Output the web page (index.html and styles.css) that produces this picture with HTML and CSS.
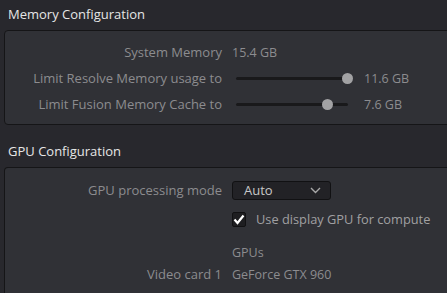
FILE: index.html
```html
<!DOCTYPE html>
<html lang="en">
<head>
    <meta charset="UTF-8">
    <title>Memory and GPU</title>
    <link rel="stylesheet" href="styles.css">
</head>
<body>
    <div class="section">
        <h2 class="title">Memory Configuration</h2>
        <div class="panel mem">
            <div class="row">
                <span class="label">System Memory</span>
                <span class="value">15.4 GB</span>
            </div>
            <div class="row">
                <span class="label">Limit Resolve Memory usage to</span>
                <div class="slider"><div class="thumb" style="left: 100%"></div></div>
                <span class="value">11.6 GB</span>
            </div>
            <div class="row">
                <span class="label">Limit Fusion Memory Cache to</span>
                <div class="slider"><div class="thumb" style="left: 82%"></div></div>
                <span class="value">7.6 GB</span>
            </div>
        </div>
    </div>

    <div class="section">
        <h2 class="title second">GPU Configuration</h2>
        <div class="panel gpu">
            <div class="row">
                <span class="label">GPU processing mode</span>
                <div class="select">
                    <span>Auto</span>
                    <svg width="11" height="7" viewBox="0 0 11 7"><path d="M1 1l4.5 4.5L10 1" fill="none" stroke="#a8a8a8" stroke-width="1.4"/></svg>
                </div>
            </div>
            <div class="row check-row">
                <span class="label"></span>
                <div class="checkbox">
                    <svg width="12" height="11" viewBox="0 0 12 11"><path d="M1.5 5.5l3 3.5L10.5 1.5" fill="none" stroke="#fff" stroke-width="2.2"/></svg>
                </div>
                <span class="value check-text">Use display GPU for compute</span>
            </div>
            <div class="row gpus-row">
                <span class="label"></span>
                <span class="value">GPUs</span>
            </div>
            <div class="row small-row">
                <span class="label">Video card 1</span>
                <span class="value">GeForce GTX 960</span>
            </div>
        </div>
    </div>
</body>
</html>
```

FILE: styles.css
```css
body {
    margin: 0;
    background: #28282d;
    font-family: "Open Sans", "Noto Sans", sans-serif;
    font-size: 13px;
    color: #8c8c8f;
    overflow: hidden;
    width: 447px;
    height: 293px;
}
.title {
    margin: 0;
    padding: 5px 0 0 8px;
    height: 30px;
    box-sizing: border-box;
    font-size: 13px;
    line-height: 18px;
    font-weight: 400;
    color: #e6e6e6;
}
.title.second {
    height: 42px;
    padding-top: 17px;
}
.panel {
    margin-left: 4px;
    margin-right: -10px;
    background: #303136;
    border: 1px solid #151517;
    border-radius: 4px;
}
.mem {
    height: 95px;
    box-sizing: border-box;
    padding-top: 8px;
}
.gpu {
    height: 116px;
    padding-top: 9px;
    border-bottom: none;
    border-radius: 4px 4px 0 0;
    overflow: hidden;
}
.row {
    display: flex;
    align-items: center;
    height: 26px;
}
.label {
    width: 217px;
    flex: none;
    text-align: right;
    margin-right: 10px;
}
.value {
    white-space: nowrap;
    font-size: 12.5px;
}
.slider {
    position: relative;
    width: 112px;
    height: 3px;
    margin: 0 16px 0 4px;
    background: #19191b;
    border-radius: 2px;
}
.thumb {
    position: absolute;
    top: -4px;
    width: 11px;
    height: 11px;
    margin-left: -6px;
    border-radius: 50%;
    background: #a2a2a4;
}
.select {
    display: flex;
    align-items: center;
    justify-content: space-between;
    width: 99px;
    height: 19px;
    box-sizing: border-box;
    padding: 0 9px 0 11px;
    background: #222226;
    border: 1px solid #111113;
    border-radius: 3px;
    color: #c8c8c8;
}
.check-row {
    height: 32px;
}
.checkbox {
    display: flex;
    align-items: center;
    justify-content: center;
    width: 14px;
    height: 15px;
    box-sizing: border-box;
    background: #1e1e21;
    border: 1px solid #111113;
    border-radius: 2px;
    margin-right: 10px;
}
.check-text {
    color: #a0a0a2;
    font-size: 12.8px;
}
.gpus-row {
    margin-top: 6px;
    height: 22px;
}
.small-row {
    height: 22px;
}
```
